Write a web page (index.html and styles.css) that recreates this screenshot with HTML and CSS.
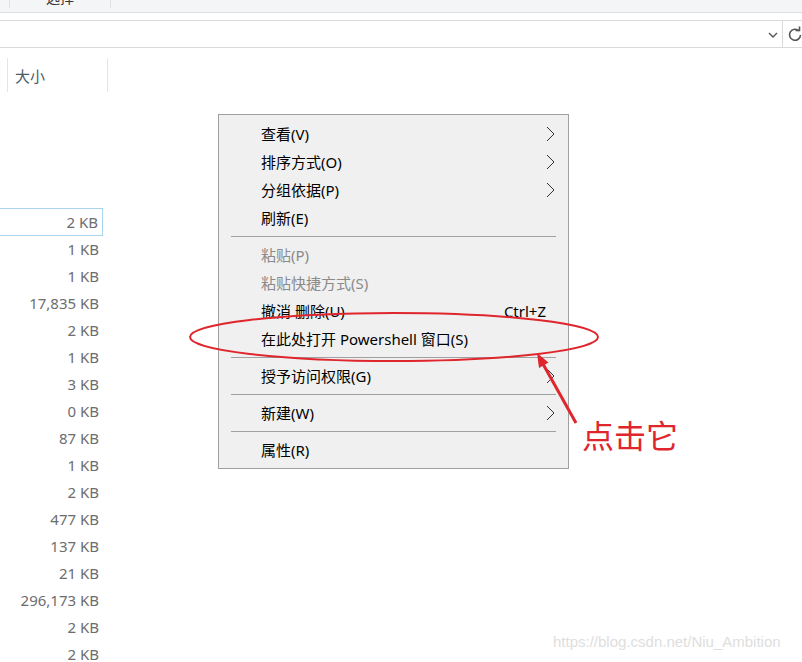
FILE: index.html
```html
<!DOCTYPE html>
<html lang="zh-CN">
  <head>
    <meta charset="UTF-8" />
    <title>右键菜单</title>
    <link rel="stylesheet" href="styles.css">
  </head>

  <body>
    <div class="toolbar">
      <span class="tool-sep"></span>
      <span class="tool-label">选择</span>
      <span class="tool-sep"></span>
    </div>

    <div class="addressbar">
      <div class="address-box">
        <svg class="chev" width="10" height="7" viewBox="0 0 10 7">
          <polyline points="1,1 5,5 9,1" fill="none" stroke="#555" stroke-width="1.4" />
        </svg>
      </div>
      <div class="refresh">
        <svg width="14" height="16" viewBox="0 0 14 16">
          <path d="M11 5 A5.5 5.5 0 1 0 12.5 9" fill="none" stroke="#555" stroke-width="1.6" />
          <polyline points="7.5,4.5 11.5,4.5 11.5,0.5" fill="none" stroke="#555" stroke-width="1.6" />
        </svg>
      </div>
    </div>

    <div class="header">
      <span class="head-sep"></span>
      <span class="head-label">大小</span>
      <span class="head-sep"></span>
    </div>

    <div class="list">
      <div class="row selected">2 KB</div>
      <div class="row">1 KB</div>
      <div class="row">1 KB</div>
      <div class="row">17,835 KB</div>
      <div class="row">2 KB</div>
      <div class="row">1 KB</div>
      <div class="row">3 KB</div>
      <div class="row">0 KB</div>
      <div class="row">87 KB</div>
      <div class="row">1 KB</div>
      <div class="row">2 KB</div>
      <div class="row">477 KB</div>
      <div class="row">137 KB</div>
      <div class="row">21 KB</div>
      <div class="row">296,173 KB</div>
      <div class="row">2 KB</div>
      <div class="row">2 KB</div>
    </div>

    <div class="menu">
      <div class="item"><span>查看(V)</span><svg class="sub" width="9" height="16" viewBox="0 0 9 16"><polyline points="1,1 8,8 1,15" fill="none" stroke="#333" stroke-width="1" /></svg></div>
      <div class="item"><span>排序方式(O)</span><svg class="sub" width="9" height="16" viewBox="0 0 9 16"><polyline points="1,1 8,8 1,15" fill="none" stroke="#333" stroke-width="1" /></svg></div>
      <div class="item"><span>分组依据(P)</span><svg class="sub" width="9" height="16" viewBox="0 0 9 16"><polyline points="1,1 8,8 1,15" fill="none" stroke="#333" stroke-width="1" /></svg></div>
      <div class="item"><span>刷新(E)</span></div>
      <div class="sep"></div>
      <div class="item disabled"><span>粘贴(P)</span></div>
      <div class="item disabled"><span>粘贴快捷方式(S)</span></div>
      <div class="item"><span>撤消 删除(U)</span><span class="shortcut">Ctrl+Z</span></div>
      <div class="item"><span>在此处打开 Powershell 窗口(S)</span></div>
      <div class="sep"></div>
      <div class="item"><span>授予访问权限(G)</span><svg class="sub" width="9" height="16" viewBox="0 0 9 16"><polyline points="1,1 8,8 1,15" fill="none" stroke="#333" stroke-width="1" /></svg></div>
      <div class="sep"></div>
      <div class="item"><span>新建(W)</span><svg class="sub" width="9" height="16" viewBox="0 0 9 16"><polyline points="1,1 8,8 1,15" fill="none" stroke="#333" stroke-width="1" /></svg></div>
      <div class="sep"></div>
      <div class="item"><span>属性(R)</span></div>
    </div>

    <!-- red annotation drawn over the screenshot -->
    <svg class="annot" width="802" height="662" viewBox="0 0 802 662">
      <ellipse cx="394" cy="337" rx="204" ry="24" fill="none" stroke="#e0262d" stroke-width="2" />
      <line x1="576" y1="423" x2="543" y2="364" stroke="#e0262d" stroke-width="3" />
      <polygon points="537,353 548.5,362.5 539,368" fill="#e0262d" />
    </svg>
    <div class="callout">点击它</div>

    <div class="watermark">https://blog.csdn.net/Niu_Ambition</div>
  </body>
</html>
```

FILE: styles.css
```css
body {
  margin: 0;
  padding: 0;
  width: 802px;
  height: 662px;
  overflow: hidden;
  position: relative;
  background-color: #fff;
  font-family: "Noto Sans", "Noto Sans CJK SC", sans-serif;
}

/* ribbon strip cut at the top */
.toolbar {
  display: flex;
  height: 12px;
  overflow: hidden;
  background-color: #f4f5f7;
  border-bottom: 1px solid #dcdddf;
}

.tool-sep {
  width: 1px;
  height: 8px;
  background-color: #dfe0e2;
}

.toolbar .tool-sep:first-child {
  margin-left: 9px;
}

.tool-label {
  width: 100px;
  margin-top: -12px;
  font-size: 14px;
  line-height: 20px;
  text-align: center;
  color: #333;
}

/* address bar */
.addressbar {
  display: flex;
  margin-top: 7px;
  height: 26px;
  border-top: 1px solid #d9d9d9;
  border-bottom: 1px solid #d9d9d9;
}

.address-box {
  display: flex;
  align-items: center;
  justify-content: flex-end;
  width: 789px;
  border-right: 1px solid #d9d9d9;
}

.chev {
  margin-right: 4px;
  margin-top: 3px;
}

.refresh {
  display: flex;
  align-items: center;
  padding-left: 5px;
}

/* column header */
.header {
  display: flex;
  align-items: center;
  margin-top: 10px;
  height: 34px;
}

.head-sep {
  width: 1px;
  height: 34px;
  background-color: #e5e5e5;
}

.header .head-sep:first-child {
  margin-left: 7px;
}

.head-label {
  width: 92px;
  padding-left: 7px;
  font-size: 15px;
  color: #4f5b66;
}

/* file size column */
.list {
  margin-top: 117px;
}

.row {
  box-sizing: border-box;
  width: 103px;
  height: 27px;
  line-height: 27px;
  padding-right: 4px;
  text-align: right;
  font-size: 15px;
  color: #6d6d6d;
}

.row.selected {
  margin-top: -1px;
  height: 28px;
  border: 1px solid #a8d4ee;
  border-left: none;
  line-height: 26px;
}

/* context menu */
.menu {
  position: absolute;
  left: 218px;
  top: 114px;
  width: 349px;
  padding: 5px 0 4px 0;
  background-color: #f0f0f0;
  border: 1px solid #a0a0a0;
  font-size: 15px;
  color: #000;
}

.item {
  display: flex;
  align-items: center;
  justify-content: space-between;
  height: 28px;
  line-height: 28px;
  padding-left: 42px;
  padding-right: 13px;
}

.item.disabled {
  color: #8a8a8a;
}

.shortcut {
  margin-right: 9px;
}

.sep {
  height: 1px;
  margin: 4px 12px 4px 12px;
  background-color: #a0a0a0;
}

.annot {
  position: absolute;
  left: 0;
  top: 0;
  pointer-events: none;
}

.callout {
  position: absolute;
  left: 582px;
  top: 416px;
  font-family: "Noto Sans CJK SC", sans-serif;
  font-size: 32px;
  line-height: 36px;
  color: #e0262d;
}

.watermark {
  position: absolute;
  left: 553px;
  top: 633px;
  font-family: "Liberation Sans", Arial, sans-serif;
  font-size: 15px;
  color: #dedede;
}
```
